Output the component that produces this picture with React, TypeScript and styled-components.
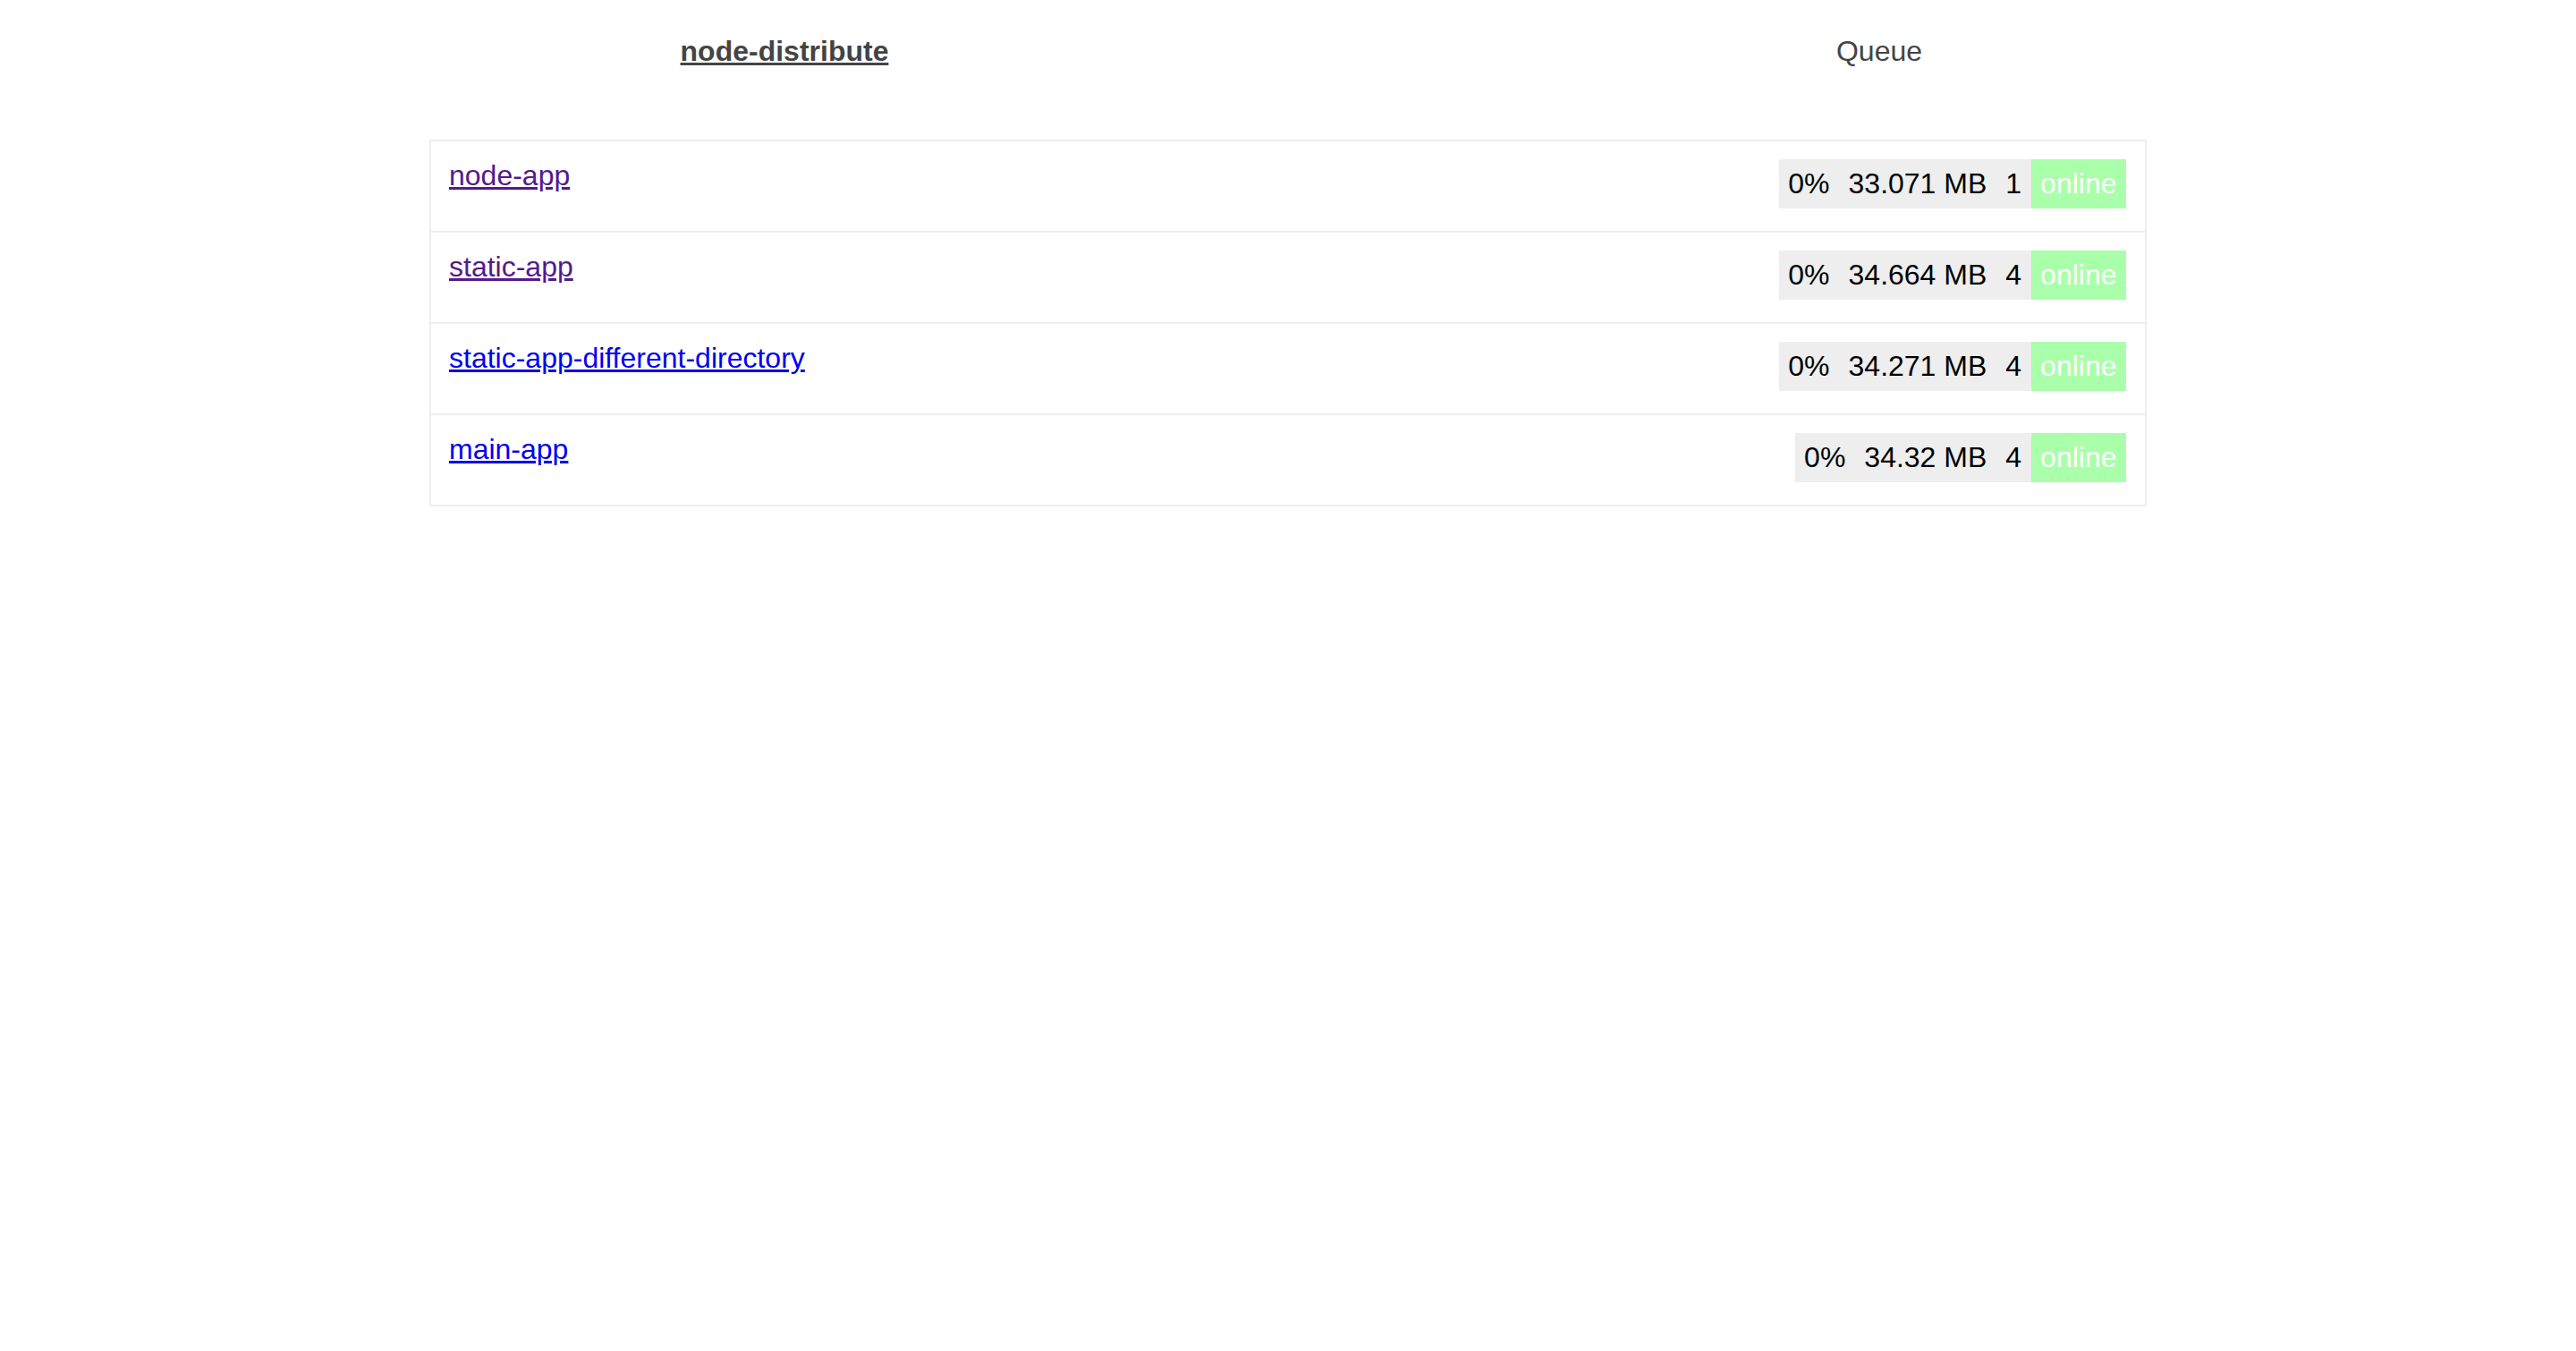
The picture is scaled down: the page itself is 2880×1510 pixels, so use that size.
import styled, { createGlobalStyle } from "styled-components";

const GlobalStyle = createGlobalStyle`
  html, body {
    margin: 0;
    background: #fff;
  }
  body {
    font-family: "Liberation Sans", Arial, Helvetica, sans-serif;
    font-size: 32px;
    line-height: 37px;
  }
`;

const Nav = styled.nav`
  display: grid;
  grid-template-columns: repeat(2, 1224px);
  padding: 39px 0 0 265px;
`;

const NavItem = styled.a<{ $active?: boolean }>`
  text-align: center;
  color: #444;
  font-weight: ${(p) => (p.$active ? 700 : 400)};
  text-decoration: ${(p) => (p.$active ? "underline" : "none")};
`;

const List = styled.ul`
  box-sizing: border-box;
  list-style: none;
  width: 1920px;
  margin: 80px auto 0;
  padding: 0;
  border: 2px solid #eee;
`;

const Row = styled.li`
  box-sizing: border-box;
  height: 102px;
  display: flex;
  justify-content: space-between;
  align-items: flex-start;
  padding: 20px 21px 0 20px;
  border-bottom: 2px solid #eee;
  &:last-child {
    height: 100px;
    border-bottom: none;
  }
`;

const AppLink = styled.a<{ $visited?: boolean }>`
  color: ${(p) => (p.$visited ? "#551a8b" : "#0000ee")};
  text-decoration: underline;
`;

const Stats = styled.div`
  display: flex;
  background: #eee;
  color: #000;
`;

const Stat = styled.span<{ $status?: boolean }>`
  padding: 9px 10.5px;
  background: ${(p) => (p.$status ? "#aaffaa" : "transparent")};
  color: ${(p) => (p.$status ? "#fff" : "#000")};
`;

const apps = [
  { name: "node-app", cpu: "0%", mem: "33.071 MB", instances: 1, visited: true },
  { name: "static-app", cpu: "0%", mem: "34.664 MB", instances: 4, visited: true },
  { name: "static-app-different-directory", cpu: "0%", mem: "34.271 MB", instances: 4 },
  { name: "main-app", cpu: "0%", mem: "34.32 MB", instances: 4 },
];

export default function App() {
  return (
    <>
      <GlobalStyle />
      <Nav>
        <NavItem href="#" $active>
          node-distribute
        </NavItem>
        <NavItem href="#">Queue</NavItem>
      </Nav>
      <List>
        {apps.map((app) => (
          <Row key={app.name}>
            <AppLink href="#" $visited={app.visited}>
              {app.name}
            </AppLink>
            <Stats>
              <Stat>{app.cpu}</Stat>
              <Stat>{app.mem}</Stat>
              <Stat>{app.instances}</Stat>
              <Stat $status>online</Stat>
            </Stats>
          </Row>
        ))}
      </List>
    </>
  );
}
